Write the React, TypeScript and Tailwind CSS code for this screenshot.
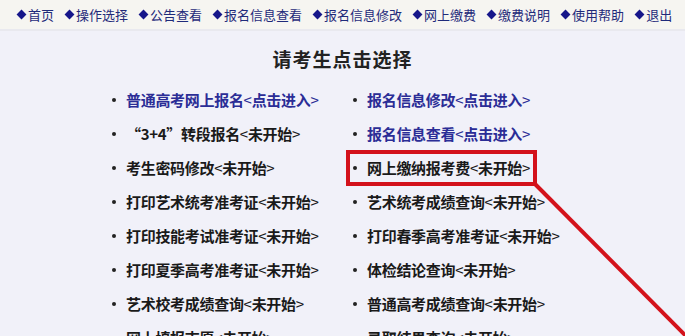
const navItems = [
  "首页",
  "操作选择",
  "公告查看",
  "报名信息查看",
  "报名信息修改",
  "网上缴费",
  "缴费说明",
  "使用帮助",
  "退出",
];

type Entry = { label: string; status: string; link?: boolean };

const leftColumn: Entry[] = [
  { label: "普通高考网上报名", status: "点击进入", link: true },
  { label: "“3+4”转段报名", status: "未开始" },
  { label: "考生密码修改", status: "未开始" },
  { label: "打印艺术统考准考证", status: "未开始" },
  { label: "打印技能考试准考证", status: "未开始" },
  { label: "打印夏季高考准考证", status: "未开始" },
  { label: "艺术校考成绩查询", status: "未开始" },
  { label: "网上填报志愿", status: "未开始" },
];

const rightColumn: Entry[] = [
  { label: "报名信息修改", status: "点击进入", link: true },
  { label: "报名信息查看", status: "点击进入", link: true },
  { label: "网上缴纳报考费", status: "未开始" },
  { label: "艺术统考成绩查询", status: "未开始" },
  { label: "打印春季高考准考证", status: "未开始" },
  { label: "体检结论查询", status: "未开始" },
  { label: "普通高考成绩查询", status: "未开始" },
  { label: "录取结果查询", status: "未开始" },
];

function Item({ entry }: { entry: Entry }) {
  return (
    <li className="flex h-[34px] items-center gap-[10px]">
      <span className="h-[4px] w-[4px] shrink-0 rounded-full bg-[#222]" />
      <span
        className={`whitespace-nowrap text-[15px] font-bold tracking-[-0.3px] ${
          entry.link ? "text-[#2b2d96]" : "text-[#1a1a1a]"
        }`}
      >
        {entry.label}
        <span className="font-normal">&lt;</span>
        {entry.status}
        <span className="font-normal">&gt;</span>
      </span>
    </li>
  );
}

export default function App() {
  return (
    <div
      className="relative h-[336px] w-full overflow-hidden bg-[#f1f1f9]"
      style={{ fontFamily: '"Noto Sans CJK SC", "Noto Sans", sans-serif' }}
    >
      <nav className="flex h-[31px] items-center gap-[10px] border-b-2 border-[#e9e9ef] bg-[#f6f5f1] pl-[16px] text-[13px] text-[#1f2a7a]">
        {navItems.map((item) => (
          <a key={item} className="flex items-center whitespace-nowrap">
            <span className="mx-[2px] mr-[3px] inline-block h-[7px] w-[7px] rotate-45 bg-[#16168a]" />
            {item}
          </a>
        ))}
      </nav>

      <h1 className="pt-[14px] text-center text-[19px] leading-[28px] font-bold tracking-[1px] text-[#222]">
        请考生点击选择
      </h1>

      <div className="mt-[10px] flex pl-[112px]">
        <ul className="w-[241px]">
          {leftColumn.map((e) => (
            <Item key={e.label} entry={e} />
          ))}
        </ul>
        <ul>
          {rightColumn.map((e) => (
            <Item key={e.label} entry={e} />
          ))}
        </ul>
      </div>

      {/* annotation */}
      <div className="absolute left-[346px] top-[150px] h-[36px] w-[191px] border-[4px] border-[#d3121b]" />
      <svg className="pointer-events-none absolute inset-0" width="685" height="336">
        <line x1="535" y1="184" x2="690" y2="340" stroke="#d3121b" strokeWidth="4" />
      </svg>
    </div>
  );
}
